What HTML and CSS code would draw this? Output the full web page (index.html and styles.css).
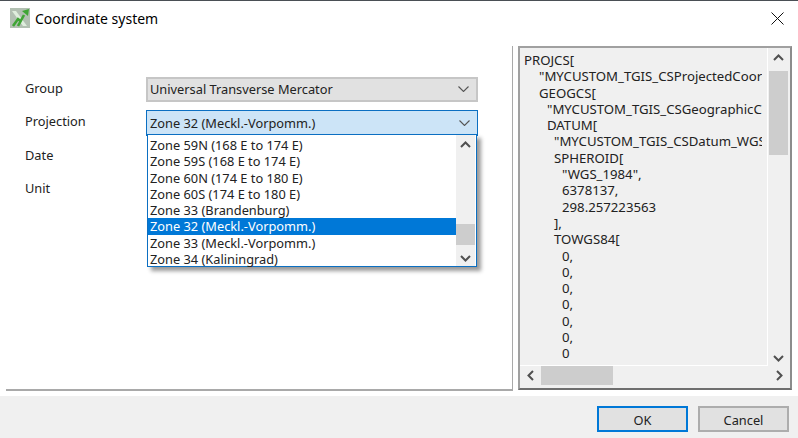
FILE: index.html
```html
<!DOCTYPE html>
<html lang="en">
<head>
<meta charset="utf-8">
<title>Coordinate system</title>
<link rel="stylesheet" href="styles.css">
</head>
<body>
<div class="dialog">
  <div class="strip"></div>
  <header class="titlebar">
    <svg class="app-icon" viewBox="0 0 20 20" width="20" height="20">
      <rect width="20" height="20" fill="#b2c0b2"/>
      <path d="M2 3L6 3L17 18L13 18Z" fill="#dfeedd"/>
      <path d="M3 18L8 11L10.5 13" fill="none" stroke="#3fa535" stroke-width="2.6"/>
      <path d="M8 18L14 7" fill="none" stroke="#3fa535" stroke-width="2.6"/>
      <path d="M12 3L19 1L18 8Z" fill="#3fa535"/>
    </svg>
    <span class="title">Coordinate system</span>
    <svg class="close" viewBox="0 0 13 13" width="13" height="13"><path d="M.5.5L12.5 12.5M12.5.5L.5 12.5" stroke="#111" fill="none"/></svg>
  </header>
  <main class="content">
    <section class="form-pane">
      <div class="form">
        <label class="lbl">Group</label>
        <div class="combo combo-off"><span>Universal Transverse Mercator</span><svg class="chev" viewBox="0 0 11 6" width="11" height="6"><path d="M.5.5L5.5 5.5L10.5.5" fill="none" stroke="#555" stroke-width="1.1"/></svg></div>
        <label class="lbl">Projection</label>
        <div class="combo combo-on"><span>Zone 32 (Meckl.-Vorpomm.)</span><svg class="chev" viewBox="0 0 11 6" width="11" height="6"><path d="M.5.5L5.5 5.5L10.5.5" fill="none" stroke="#555" stroke-width="1.1"/></svg></div>
        <label class="lbl">Date</label><div class="empty"></div>
        <label class="lbl">Unit</label><div class="empty"></div>
      </div>
      <div class="dropdown">
        <ul class="options">
          <li>Zone 59N (168 E to 174 E)</li>
          <li>Zone 59S (168 E to 174 E)</li>
          <li>Zone 60N (174 E to 180 E)</li>
          <li>Zone 60S (174 E to 180 E)</li>
          <li>Zone 33 (Brandenburg)</li>
          <li class="sel">Zone 32 (Meckl.-Vorpomm.)</li>
          <li>Zone 33 (Meckl.-Vorpomm.)</li>
          <li>Zone 34 (Kaliningrad)</li>
        </ul>
        <div class="vbar list-bar">
          <svg class="arrow" viewBox="0 0 11 7" width="11" height="7"><path d="M1 6L5.5 1.5L10 6" fill="none" stroke="#505050" stroke-width="2"/></svg>
          <div class="track"><div class="thumb list-thumb"></div></div>
          <svg class="arrow" viewBox="0 0 11 7" width="11" height="7"><path d="M1 1L5.5 5.5L10 1" fill="none" stroke="#505050" stroke-width="2"/></svg>
        </div>
      </div>
    </section>
    <section class="wkt">
      <div class="wkt-top">
        <div class="wkt-view">
          <div class="wkt-text">
            <div>PROJCS[</div>
            <div class="i2">"MYCUSTOM_TGIS_CSProjectedCoordinateSystem",</div>
            <div class="i2">GEOGCS[</div>
            <div class="i3">"MYCUSTOM_TGIS_CSGeographicCoordinateSystem",</div>
            <div class="i3">DATUM[</div>
            <div class="i4">"MYCUSTOM_TGIS_CSDatum_WGS84",</div>
            <div class="i4">SPHEROID[</div>
            <div class="i5">"WGS_1984",</div>
            <div class="i5">6378137,</div>
            <div class="i5">298.257223563</div>
            <div class="i4">],</div>
            <div class="i4">TOWGS84[</div>
            <div class="i5">0,</div>
            <div class="i5">0,</div>
            <div class="i5">0,</div>
            <div class="i5">0,</div>
            <div class="i5">0,</div>
            <div class="i5">0,</div>
            <div class="i5">0</div>
            <div class="i4">],</div>
          </div>
        </div>
        <div class="vbar wkt-bar">
          <svg class="arrow" viewBox="0 0 11 7" width="11" height="7"><path d="M1 6L5.5 1.5L10 6" fill="none" stroke="#505050" stroke-width="2"/></svg>
          <div class="track"><div class="thumb wkt-thumb"></div></div>
          <svg class="arrow" viewBox="0 0 11 7" width="11" height="7"><path d="M1 1L5.5 5.5L10 1" fill="none" stroke="#505050" stroke-width="2"/></svg>
        </div>
      </div>
      <div class="hbar">
        <svg class="arrow" viewBox="0 0 7 11" width="7" height="11"><path d="M6 1L1.5 5.5L6 10" fill="none" stroke="#505050" stroke-width="2"/></svg>
        <div class="htrack"><div class="hthumb"></div></div>
        <svg class="arrow" viewBox="0 0 7 11" width="7" height="11"><path d="M1 1L5.5 5.5L1 10" fill="none" stroke="#505050" stroke-width="2"/></svg>
      </div>
    </section>
  </main>
  <footer class="footer">
    <button class="btn btn-default">OK</button>
    <button class="btn">Cancel</button>
  </footer>
</div>
</body>
</html>
```

FILE: styles.css
```css
* { box-sizing: border-box; }
html, body { margin: 0; padding: 0; }
body {
  width: 798px;
  height: 438px;
  overflow: hidden;
  background: #fff;
  font-family: "Noto Sans", sans-serif;
  font-size: 12.8px;
  color: #111;
}
.dialog { display: flex; flex-direction: column; height: 438px; }
.strip { height: 1px; background: #4a4f55; flex: none; }
.titlebar {
  flex: none;
  height: 37px;
  display: flex;
  align-items: center;
  padding: 0 14px 2px 10px;
}
.app-icon { flex: none; margin-top: -1px; }
.title { margin-left: 5px; font-size: 14px; flex: 1; color: #000; }
.close { flex: none; }
.content {
  flex: none;
  height: 358px;
  display: flex;
  padding: 8px 7px 0 6px;
}
.form-pane {
  position: relative;
  width: 507px;
  height: 345px;
  border-right: 1px solid #a9a9a9;
  border-bottom: 2px solid #a9a9a9;
  flex: none;
  padding: 30px 34px 0 19px;
}
.form {
  display: grid;
  grid-template-columns: 121px 1fr;
  grid-auto-rows: 26px;
  row-gap: 7.67px;
  align-items: center;
}
.lbl { color: #222; padding-bottom: 3px; }
.combo {
  height: 26px;
  display: flex;
  align-items: center;
  justify-content: space-between;
  padding: 0 7px 0 3px;
  color: #222;
}
.combo-off { background: #e1e1e1; border: 2px solid #c6c6c6; height: 25px; }
.combo-off span { margin-left: -1px; }
.combo-on { background: #cce4f7; border: 1px solid #0b6fc2; padding-left: 3px; }
.chev { flex: none; }
.dropdown {
  position: absolute;
  left: 141px;
  top: 88px;
  width: 330px;
  height: 133px;
  display: flex;
  background: #fff;
  border: 1px solid #0b6fc2;
  box-shadow: 4px 4px 4px rgba(0, 0, 0, .4);
}
.options { list-style: none; margin: 0; padding: 2px 0 0; flex: 1; }
.options li { height: 16.3px; line-height: 16.3px; padding-left: 2px; white-space: nowrap; color: #222; }
.options .sel { background: #0078d7; color: #fff; }
.vbar {
  flex: none;
  display: flex;
  flex-direction: column;
  align-items: center;
  justify-content: space-between;
  background: #f0f0f0;
  width: 19px;
}
.list-bar { padding: 6px 0 4px; margin-right: 1px; }
.track { flex: 1; width: 100%; position: relative; }
.thumb { position: absolute; left: 0; right: 0; background: #cdcdcd; }
.list-thumb { top: 76px; height: 21px; }
.wkt {
  width: 274px;
  height: 344px;
  margin-left: 5px;
  flex: none;
  display: flex;
  flex-direction: column;
  border: 2px solid #a0a0a0;
  border-right-color: #8c8c8c;
  border-bottom-color: #6e6e6e;
  background: #f0f0f0;
}
.wkt-top { flex: 1; min-height: 0; display: flex; }
.wkt-view {
  flex: 1;
  min-width: 0;
  margin-right: 1px;
  padding-right: 5px;
  border-bottom: 1px solid #fff;
  border-right: 1px solid #fff;
}
.wkt-text {
  height: 100%;
  overflow: hidden;
  padding: 4px 0 0 4px;
  font-size: 13.2px;
  line-height: 16.3px;
  white-space: nowrap;
  color: #222;
}
.i2 { padding-left: 15px; }
.i3 { padding-left: 23px; }
.i4 { padding-left: 30px; }
.i5 { padding-left: 38px; }
.wkt-bar { padding: 6px 0 4px; width: 19px; margin-right: 2px; }
.wkt-thumb { top: 10px; height: 84px; }
.hbar {
  flex: none;
  height: 22px;
  display: flex;
  align-items: center;
  padding: 0 7px 3px 7px;
  gap: 5px;
}
.htrack { flex: 1; height: 19px; position: relative; }
.hthumb { position: absolute; left: 2px; top: 0; width: 72px; height: 19px; background: #cdcdcd; }
.footer {
  flex: none;
  height: 42px;
  background: #f0f0f0;
  display: flex;
  justify-content: flex-end;
  align-items: flex-start;
  gap: 10px;
  padding: 10px 9px 0 0;
}
.btn {
  width: 91px;
  height: 26px;
  background: #e1e1e1;
  border: 2px solid #adadad;
  font: inherit;
  color: #222;
  padding: 1px 0 0;
}
.btn-default { border-color: #0078d7; }
```
